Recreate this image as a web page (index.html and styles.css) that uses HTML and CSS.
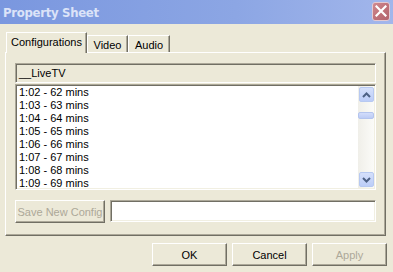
FILE: index.html
```html
<!DOCTYPE html>
<html>
<head>
<meta charset="utf-8">
<link rel="stylesheet" href="styles.css">
</head>
<body>
<div class="window">
  <div class="titlebar">
    <span class="title">Property Sheet</span>
    <span class="close"><svg width="12" height="12" viewBox="0 0 12 12"><path d="M1.5 1.5 L10.5 10.5 M10.5 1.5 L1.5 10.5" stroke="#fff" stroke-width="2.2" stroke-linecap="square"/></svg></span>
  </div>
  <div class="content">
    <div class="tabs">
      <div class="tab active tab-config">Configurations</div>
      <div class="tab tab-video">Video</div>
      <div class="tab tab-audio">Audio</div>
    </div>
    <div class="panel">
      <div class="header">__LiveTV</div>
      <div class="list">
        <div class="items">
          <div class="item">1:02 - 62 mins</div>
          <div class="item">1:03 - 63 mins</div>
          <div class="item">1:04 - 64 mins</div>
          <div class="item">1:05 - 65 mins</div>
          <div class="item">1:06 - 66 mins</div>
          <div class="item">1:07 - 67 mins</div>
          <div class="item">1:08 - 68 mins</div>
          <div class="item">1:09 - 69 mins</div>
        </div>
        <div class="scrollbar">
          <div class="sbtn"><svg width="9" height="6" viewBox="0 0 9 6"><path d="M1 5 L4.5 1.5 L8 5" fill="none" stroke="#4d6185" stroke-width="2"/></svg></div>
          <div class="thumb"></div>
          <div class="track"></div>
          <div class="sbtn"><svg width="9" height="6" viewBox="0 0 9 6"><path d="M1 1 L4.5 4.5 L8 1" fill="none" stroke="#4d6185" stroke-width="2"/></svg></div>
        </div>
      </div>
      <div class="saverow">
        <div class="btn save disabled">Save New Config</div>
        <div class="edit"></div>
      </div>
    </div>
    <div class="buttons">
      <div class="btn dlg">OK</div>
      <div class="btn dlg">Cancel</div>
      <div class="btn dlg disabled">Apply</div>
    </div>
  </div>
</div>
</body>
</html>
```

FILE: styles.css
```css
html, body {
  margin: 0;
  padding: 0;
}
body {
  width: 393px;
  height: 272px;
  overflow: hidden;
  background: #ece9d8;
  font-family: "Liberation Sans", Arial, sans-serif;
  font-size: 11px;
  color: #000;
}
.window {
  width: 393px;
  height: 272px;
}
.titlebar {
  height: 24px;
  background: linear-gradient(to right, #7a97df 0%, #8ca6e4 60%, #a2b6eb 100%);
  display: flex;
  align-items: center;
  justify-content: space-between;
  padding: 0 3px 0 3px;
  box-sizing: border-box;
}
.title {
  font-family: "DejaVu Sans Condensed", "Liberation Sans", sans-serif;
  font-weight: bold;
  font-size: 13px;
  letter-spacing: -0.3px;
  color: #dbe3f8;
  margin-top: 1px;
}
.close {
  width: 18px;
  height: 19px;
  box-sizing: border-box;
  border: 1px solid #e3c9d2;
  border-radius: 3px;
  background: linear-gradient(135deg, #d08a90 0%, #c0727a 50%, #b2656f 100%);
  display: flex;
  align-items: center;
  justify-content: center;
  margin-top: -2px;
}
.content {
  padding: 8px 7px 0 5px;
}
.tabs {
  display: flex;
  align-items: flex-end;
  height: 20px;
  padding-left: 1px;
}
.tab {
  box-sizing: border-box;
  height: 17px;
  border-top: 1px solid #fff;
  border-left: 1px solid #fff;
  border-right: 1px solid #716f64;
  box-shadow: inset -1px 0 0 #aca899;
  text-align: center;
  line-height: 17px;
  padding-top: 1px;
}
.tab.active {
  height: 21px;
  margin-bottom: -1px;
  background: #ece9d8;
  position: relative;
  z-index: 1;
  line-height: 16px;
  padding-top: 1px;
}
.tab-config { width: 81px; }
.tab-video { width: 41px; }
.tab-audio { width: 42px; }
.panel {
  box-sizing: border-box;
  width: 381px;
  height: 184px;
  border-top: 1px solid #fff;
  border-left: 1px solid #fff;
  border-right: 1px solid #716f64;
  border-bottom: 1px solid #716f64;
  box-shadow: inset -1px -1px 0 #aca899;
  padding: 10px 9px 0 9px;
}
.header {
  box-sizing: border-box;
  width: 361px;
  height: 20px;
  border-top: 1px solid #aca899;
  border-left: 1px solid #aca899;
  border-right: 1px solid #fff;
  border-bottom: 1px solid #fff;
  box-shadow: inset 1px 1px 0 #716f64;
  padding-left: 3px;
  line-height: 18px;
}
.list {
  box-sizing: border-box;
  margin-top: 1px;
  width: 361px;
  height: 106px;
  background: #fff;
  border-top: 1px solid #aca899;
  border-left: 1px solid #aca899;
  border-right: 1px solid #fff;
  border-bottom: 1px solid #fff;
  box-shadow: inset 1px 1px 0 #716f64, inset -1px -1px 0 #f1efe2;
  display: flex;
  padding: 1px 1px 1px 1px;
}
.items {
  flex: 1;
  padding-left: 2px;
}
.item {
  height: 13px;
  line-height: 13px;
}
.scrollbar {
  width: 16px;
  display: flex;
  flex-direction: column;
  align-items: center;
  background: linear-gradient(to right, #f0efe9, #fbfbf8);
  padding: 1px 0;
  box-sizing: border-box;
}
.sbtn {
  box-sizing: border-box;
  width: 15px;
  height: 15px;
  margin-left: 1px;
  border: 1px solid #b7c9f1;
  border-radius: 2px;
  background: linear-gradient(to bottom, #d5e0fb, #bccdf8);
  display: flex;
  align-items: center;
  justify-content: center;
}
.thumb {
  box-sizing: border-box;
  width: 16px;
  height: 7px;
  margin-top: 10px;
  border: 1px solid #b3c4ee;
  border-radius: 2px;
  background: linear-gradient(to bottom, #d2ddfb, #bccbf5);
}
.track {
  flex: 1;
}
.saverow {
  display: flex;
  gap: 5px;
  margin-top: 10px;
  height: 23px;
}
.btn {
  box-sizing: border-box;
  border-top: 1px solid #fff;
  border-left: 1px solid #fff;
  border-right: 1px solid #716f64;
  border-bottom: 1px solid #716f64;
  box-shadow: inset -1px -1px 0 #aca899;
  display: flex;
  align-items: center;
  justify-content: center;
  background: #ece9d8;
  white-space: nowrap;
}
.btn.disabled {
  color: #aca899;
}
.save {
  width: 90px;
  height: 23px;
}
.edit {
  box-sizing: border-box;
  width: 266px;
  height: 22px;
  background: #fff;
  border-top: 1px solid #aca899;
  border-left: 1px solid #aca899;
  border-right: 1px solid #fff;
  border-bottom: 1px solid #fff;
  box-shadow: inset 1px 1px 0 #716f64, inset -1px -1px 0 #f1efe2;
}
.buttons {
  display: flex;
  justify-content: flex-end;
  gap: 5px;
  margin-top: 7px;
  margin-right: -1px;
}
.dlg {
  width: 75px;
  height: 23px;
}
```
